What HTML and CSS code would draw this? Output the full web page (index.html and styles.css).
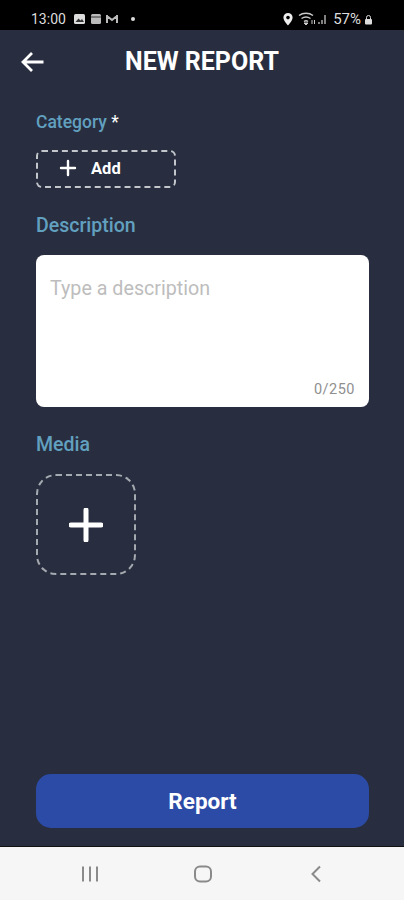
FILE: index.html
```html
<!DOCTYPE html>
<html>
  <head>
    <title>New Report</title>
    <meta name="viewport" content="width=device-width">
    <link rel="stylesheet" href="styles.css">
  </head>
  <body>
    <div class="status">
      <div class="status-side">
        <span>13:00</span>
        <svg class="st-first" width="13" height="12" viewBox="0 0 13 12"><rect x="1" y="1" width="11" height="10" rx="1.5" fill="#ddd"/><path d="M2.5 9l3-3.5 2 2 1.5-1.5L11 9z" fill="#333"/></svg>
        <svg class="st-icon" width="12" height="12" viewBox="0 0 12 12"><rect x="1" y="1" width="10" height="10" rx="1.5" fill="#bbb"/><path d="M1 4h10" stroke="#333" stroke-width="1"/></svg>
        <svg class="st-gmail" width="14" height="12" viewBox="0 0 14 12"><path d="M2 2v8M12 2v8M2 3l5 4 5-4" fill="none" stroke="#bbb" stroke-width="2"/></svg>
        <span class="dot"></span>
      </div>
      <div class="status-side">
        <svg width="12" height="14" viewBox="0 0 12 14"><path d="M6 1a4.600 4.600 0 0 0-4.600 4.600C1.400 9 6 13.500 6 13.500s4.600-4.500 4.600-7.900A4.600 4.600 0 0 0 6 1z" fill="#eee"/><circle cx="6" cy="5.6" r="1.8" fill="#000"/></svg>
        <svg class="wifi" width="30" height="14" viewBox="0 0 30 14"><path d="M1 3.500c4-3 10-3 14 0M3.500 6.500c3-2 6-2 9 0M6 9.500c1.500-1 2.500-1 4 0" fill="none" stroke="#ccc" stroke-width="1.5"/><path d="M8 13l-2-2h4zM14 8v4M16.500 8v4" stroke="#ccc" fill="#ccc"/><path d="M21 12v-2M24 12V8M27 12V3" stroke="#aaa" stroke-width="1.5"/></svg>
        <span class="batt">57%</span>
        <svg class="lock" width="9" height="11" viewBox="0 0 9 11"><path d="M2.500 5V3.500a2 2 0 0 1 4 0V5" fill="none" stroke="#ddd"/><rect x="1" y="5" width="7" height="5.500" rx="1" fill="#ddd"/></svg>
      </div>
    </div>

    <div class="app">
      <div class="topbar">
        <svg class="back" width="26" height="24" viewBox="0 0 26 24"><path d="M23.500 12H3M12 3l-9 9 9 9" fill="none" stroke="#fff" stroke-width="2.800"/></svg>
        <h1>NEW REPORT</h1>
      </div>

      <div class="form">
        <div class="cat-label">Category <b>*</b></div>
        <div class="add-btn">
          <svg width="18" height="18" viewBox="0 0 18 18"><path d="M9 2v14M2 9h14" stroke="#fff" stroke-width="2.400" stroke-linecap="round"/></svg>
          <span>Add</span>
        </div>

        <div class="label desc-label">Description</div>
        <div class="desc-box">
          <div class="placeholder">Type a description</div>
          <div class="count">0/250</div>
        </div>

        <div class="label media-label">Media</div>
        <div class="media-btn">
          <svg width="34" height="34" viewBox="0 0 34 34"><path d="M17 2v30M2 17h30" stroke="#fff" stroke-width="5" stroke-linecap="round"/></svg>
        </div>
      </div>

      <div class="report-btn">Report</div>
    </div>

    <div class="navbar">
      <svg width="18" height="16" viewBox="0 0 18 16"><path d="M2 .5v15M9 .5v15M16 .5v15" stroke="#8a8a8a" stroke-width="2"/></svg>
      <svg class="nav-home" width="20" height="18" viewBox="0 0 20 18"><rect x="2" y="1.500" width="16" height="15" rx="5" fill="none" stroke="#8a8a8a" stroke-width="2"/></svg>
      <svg width="12" height="18" viewBox="0 0 12 18"><path d="M10 1.500L2.500 9l7.500 7.500" fill="none" stroke="#8a8a8a" stroke-width="2"/></svg>
    </div>
  </body>
</html>
```

FILE: styles.css
```css
* { margin: 0; padding: 0; box-sizing: border-box; }

body {
  display: flex;
  flex-direction: column;
  height: 900px;
  font-family: Roboto, sans-serif;
  background-color: #282e3f;
  overflow: hidden;
}

.status {
  display: flex;
  justify-content: space-between;
  align-items: center;
  height: 30px;
  padding: 8px 31px 0 31px;
  background-color: #000;
  color: #ddd;
  font-size: 14px;
}

.status-side {
  display: flex;
  align-items: center;
  gap: 4px;
}

.st-first {
  margin-left: 3px;
}

.st-gmail {
  margin-left: -1px;
}

.dot {
  width: 4px;
  height: 4px;
  margin-left: 8px;
  border-radius: 50%;
  background-color: #ddd;
}

.batt {
  margin-left: 1px;
  font-size: 15px;
}

.lock {
  margin-left: -1px;
}

.app {
  flex: 1;
  display: flex;
  flex-direction: column;
  padding-bottom: 18px;
}

.topbar {
  display: flex;
  align-items: center;
  justify-content: center;
  position: relative;
  height: 62px;
}

.back {
  position: absolute;
  left: 20px;
  top: 20px;
}

.topbar h1 {
  color: #fff;
  font-size: 25px;
  font-weight: 700;
}

.form {
  flex: 1;
  padding: 20px 35px 0 36px;
}

.cat-label {
  height: 21px;
  color: #62a0c0;
  font-size: 17.5px;
  font-weight: 500;
  line-height: 21px;
}

.cat-label b {
  color: #fff;
  font-weight: 400;
}

.label {
  color: #62a0c0;
  font-size: 19.5px;
  font-weight: 500;
  line-height: 24px;
}

.add-btn {
  display: flex;
  align-items: center;
  gap: 14px;
  width: 140px;
  height: 38px;
  margin-top: 17px;
  padding: 0 0 2px 21px;
  border: 2px dashed #c3c7cc;
  border-radius: 6px;
  color: #fff;
  font-size: 16.5px;
  font-weight: 700;
}

.desc-label {
  margin-top: 26px;
}

.desc-box {
  display: flex;
  flex-direction: column;
  justify-content: space-between;
  height: 152px;
  margin-top: 17px;
  padding: 22px 14px 9px 14px;
  border-radius: 8px;
  background-color: #fff;
}

.placeholder {
  color: #bdbdbd;
  font-size: 19.7px;
  line-height: 24px;
}

.count {
  align-self: flex-end;
  color: #8f8f8f;
  font-size: 14.5px;
  letter-spacing: .5px;
}

.media-label {
  margin-top: 26px;
}

.media-btn {
  display: flex;
  align-items: center;
  justify-content: center;
  width: 100px;
  height: 101px;
  margin-top: 17px;
  border: 2px dashed #a5a9b0;
  border-radius: 20px;
}

.report-btn {
  height: 54px;
  margin: 0 35px 0 36px;
  border-radius: 15px;
  background-color: #2c4ba6;
  color: #fff;
  font-size: 22.5px;
  font-weight: 700;
  line-height: 54px;
  text-align: center;
}

.navbar {
  display: flex;
  align-items: center;
  justify-content: space-between;
  height: 54px;
  padding: 0 82px 0 81px;
  border-top: 1px solid #111;
  background-color: #f6f6f6;
}

.nav-home {
  margin-right: 3px;
}
```
